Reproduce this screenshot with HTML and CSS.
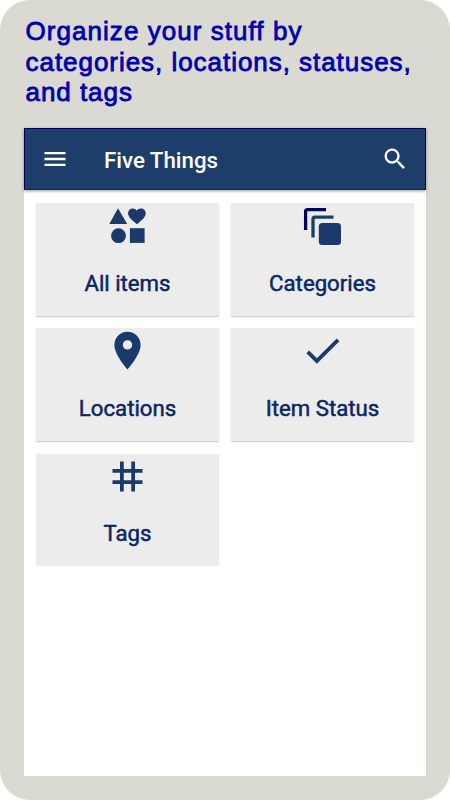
FILE: index.html
```html
<!DOCTYPE html>
<html lang="en">
<head>
<meta charset="utf-8">
<title>Five Things</title>
<link rel="stylesheet" href="styles.css">
</head>
<body>
<div class="frame">
  <h1 class="headline"><span class="line line-1">Organize your stuff by</span><span class="line line-2">categories, locations, statuses,</span><span class="line line-3">and tags</span></h1>
  <div class="screen">
    <header class="bar">
      <svg class="menu" viewBox="0 0 24 24"><path d="M3 18h18v-2H3v2zm0-5h18v-2H3v2zm0-7v2h18V6H3z"/></svg>
      <span class="title">Five Things</span>
      <svg class="search" viewBox="0 0 24 24"><path d="M15.5 14h-.79l-.28-.27A6.47 6.47 0 0 0 16 9.5 6.5 6.5 0 1 0 9.5 16c1.61 0 3.09-.59 4.23-1.57l.27.28v.79l5 4.99L20.49 19l-4.99-5zm-6 0C7.01 14 5 11.99 5 9.5S7.01 5 9.5 5 14 7.01 14 9.5 11.99 14 9.5 14z"/></svg>
    </header>
    <main class="grid">
      <section class="card">
        <svg class="icon" viewBox="0 0 45 45"><path d="M13 5.300 22.200 21H4.300z"/><path d="M32 21.300c-5-4.300-8.900-7-8.900-11 0-2.900 2.100-4.900 4.800-4.900 1.700 0 3 .8 3.900 2.200.9-1.400 2.300-2.200 4-2.200 2.700 0 4.900 2 4.900 4.900 0 4-3.700 6.700-8.700 11z"/><circle cx="13.500" cy="32.700" r="7.400"/><path d="M24.900 25.200h14.700v14.700H24.900z"/></svg>
        <span>All items</span>
      </section>
      <section class="card">
        <svg class="icon" viewBox="0 0 45 45"><path class="back" d="M5.600 27V8.500q0-1.900 1.900-1.900H26"/><path class="mid" d="M13 34.600V16q0-1.900 1.900-1.900H33.500"/><rect x="18.800" y="20" width="22.200" height="22" rx="3.500"/></svg>
        <span>Categories</span>
      </section>
      <section class="card">
        <svg class="icon" viewBox="0 0 24 24"><path d="M12 2C8.130 2 5 5.130 5 9c0 5.250 7 13 7 13s7-7.750 7-13c0-3.870-3.130-7-7-7zm0 9.500a2.500 2.500 0 1 1 0-5 2.500 2.500 0 0 1 0 5z"/></svg>
        <span>Locations</span>
      </section>
      <section class="card">
        <svg class="icon" viewBox="0 0 24 24"><path d="M9 16.170 4.830 12l-1.420 1.410L9 19 21 7l-1.410-1.410z"/></svg>
        <span>Item Status</span>
      </section>
      <section class="card card-last">
        <svg class="icon" viewBox="0 0 24 24"><path d="M20 10V8h-4V4h-2v4h-4V4H8v4H4v2h4v4H4v2h4v4h2v-4h4v4h2v-4h4v-2h-4v-4h4zm-6 4h-4v-4h4v4z"/></svg>
        <span>Tags</span>
      </section>
    </main>
  </div>
</div>
</body>
</html>
```

FILE: styles.css
```css
* { box-sizing: border-box; }
body { margin: 0; background: #fff; }
.frame {
  width: 450px;
  height: 800px;
  padding: 16px 24px 24px;
  border-radius: 30px;
  background: #dadad2;
  display: flex;
  flex-direction: column;
}
.headline {
  height: 112px;
  margin: 0;
  padding-left: 1.500px;
  font: 400 26px/30.6px "Liberation Sans", sans-serif;
  color: #0000b0;
  -webkit-text-stroke: 0.8px #0000b0;
  stroke-linejoin: round;
}
.line { display: block; white-space: nowrap; }
.line-1 { letter-spacing: 1.050px; }
.line-2 { letter-spacing: 0.960px; }
.line-3 { letter-spacing: 0.950px; }
.screen { flex: 1; background: #fff; }
.bar {
  height: 62px;
  padding: 0 16px;
  display: flex;
  align-items: center;
  background: #1d3d6b;
  border: 1px solid #000060;
  border-bottom-color: #0b2860;
  box-shadow: 0 1px 3px rgba(0, 0, 0, 0.4);
  color: #fff;
}
.bar svg { width: 28px; height: 28px; fill: #fff; }
.title {
  flex: 1;
  margin-left: 35px;
  padding-top: 1px;
  font: 500 22.300px/30px Roboto, sans-serif;
}
.grid {
  padding: 13px 12px;
  display: grid;
  grid-template-columns: 183px 183px;
  grid-auto-rows: 113px;
  gap: 12.300px 12px;
}
.card {
  display: flex;
  flex-direction: column;
  align-items: center;
  background: #ececec;
  border-radius: 1px;
  box-shadow: 0 1px 1.500px rgba(0, 0, 0, 0.22);
  color: #0b2763;
  font: 400 22.200px/30px Roboto, sans-serif;
  -webkit-text-stroke: 0.500px #0b2763;
}
.card-last { height: 112px; box-shadow: 0 0 1px rgba(0, 0, 0, 0.15); }
.card span { margin-top: 19.500px; }
.icon { width: 45px; height: 45px; fill: #1a3a6b; }
.back, .mid { fill: none; stroke: #00005f; stroke-width: 3.300; }
.mid { stroke: #17406f; }
```
